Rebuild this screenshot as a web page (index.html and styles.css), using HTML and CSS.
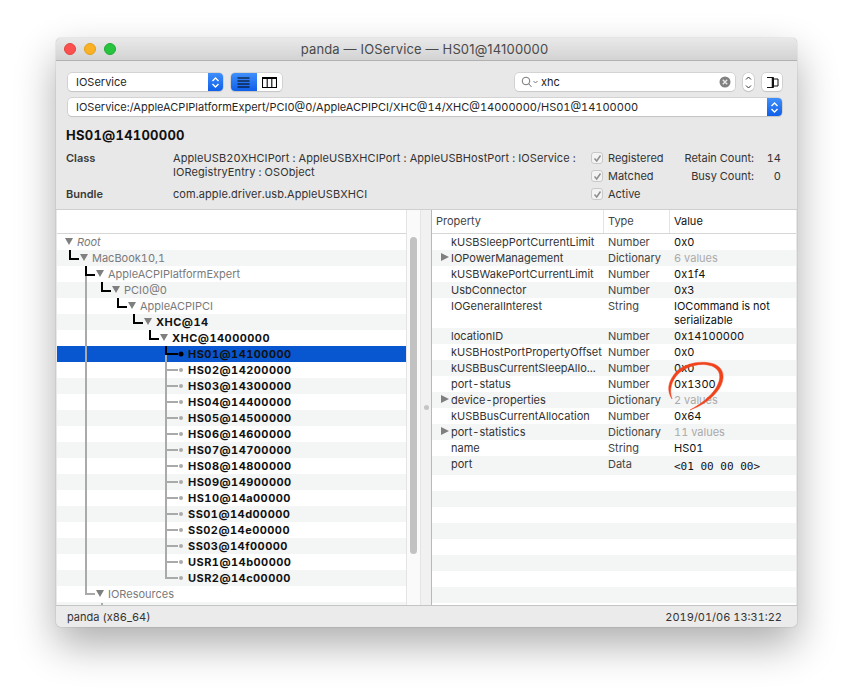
FILE: index.html
```html
<!DOCTYPE html>
<html lang="en">
<head>
  <meta charset="UTF-8">
  <title>panda — IOService — HS01@14100000</title>
  <link rel="stylesheet" href="styles.css">
</head>
<body>
  <div class="window">
    <div class="titlebar">
      <div class="lights">
        <span class="light red"></span>
        <span class="light yellow"></span>
        <span class="light green"></span>
      </div>
      <div class="title">panda — IOService — HS01@14100000</div>
    </div>

    <div class="toolbar">
      <div class="row-top">
        <div class="popup plane-popup">
          <span class="popup-text">IOService</span>
          <span class="popup-arrows">
            <svg width="9" height="13" viewBox="0 0 9 13"><path d="M1.500 5 4.500 2 7.500 5M1.500 8 4.500 11 7.500 8" fill="none" stroke="#fff" stroke-width="1.400"/></svg>
          </span>
        </div>
        <div class="segment">
          <span class="seg seg-on">
            <svg width="13" height="11" viewBox="0 0 13 11"><path d="M.5 1H12.500M.5 4H12.500M.5 7H12.500M.5 10H12.500" stroke="#000" stroke-width="1.100"/></svg>
          </span>
          <span class="seg">
            <svg width="15" height="11" viewBox="0 0 15 11"><path d="M.5 1H14.500V10.500H.5ZM5.200 1V10.500M9.800 1V10.500" fill="none" stroke="#000" stroke-width="1.100"/><path d="M0 1H15" stroke="#000" stroke-width="2"/></svg>
          </span>
        </div>
        <div class="search">
          <svg class="search-icon" width="18" height="12" viewBox="0 0 18 12"><circle cx="5" cy="5" r="3.800" fill="none" stroke="#777" stroke-width="1"/><path d="M7.800 7.800 10.500 11M12.500 5 14.500 7 16.500 5" fill="none" stroke="#777" stroke-width="1"/></svg>
          <span class="search-text">xhc</span>
          <svg class="search-clear" width="12" height="12" viewBox="0 0 12 12"><circle cx="6" cy="6" r="5.500" fill="#808080"/><path d="M3.800 3.800 8.200 8.200M8.200 3.800 3.800 8.200" stroke="#e8e8e8" stroke-width="1.400"/></svg>
        </div>
        <div class="stepper">
          <svg width="7" height="15" viewBox="0 0 7 15"><path d="M1 4.500 3.500 2 6 4.500M1 10.500 3.500 13 6 10.500" fill="none" stroke="#333" stroke-width="1"/></svg>
        </div>
        <div class="inspector">
          <svg width="13" height="13" viewBox="0 0 13 13"><path d="M1 1.500H7.500V11.500H1M7.500 3H12V10H7.500" fill="none" stroke="#111" stroke-width="1"/><path d="M6.500 1.500V11.500" stroke="#111" stroke-width="1.500"/></svg>
        </div>
      </div>

      <div class="popup path-popup">
        <span class="popup-text">IOService:/AppleACPIPlatformExpert/PCI0@0/AppleACPIPCI/XHC@14/XHC@14000000/HS01@14100000</span>
        <span class="popup-arrows">
          <svg width="9" height="13" viewBox="0 0 9 13"><path d="M1.500 5 4.500 2 7.500 5M1.500 8 4.500 11 7.500 8" fill="none" stroke="#fff" stroke-width="1.400"/></svg>
        </span>
      </div>

      <h1 class="entry-name">HS01@14100000</h1>

      <div class="info">
        <div class="info-text">
          <div class="info-row">
            <span class="info-label">Class</span>
            <span class="info-value">AppleUSB20XHCIPort : AppleUSBXHCIPort : AppleUSBHostPort : IOService : IORegistryEntry : OSObject</span>
          </div>
          <div class="info-row">
            <span class="info-label">Bundle</span>
            <span class="info-value">com.apple.driver.usb.AppleUSBXHCI</span>
          </div>
        </div>
        <div class="checks">
          <div class="check"><span class="check-box"><svg width="9" height="9" viewBox="0 0 9 9"><path d="M1.500 4.500 3.700 7 7.500 1.500" fill="none" stroke="#8e8e8e" stroke-width="1.500"/></svg></span>Registered</div>
          <div class="check"><span class="check-box"><svg width="9" height="9" viewBox="0 0 9 9"><path d="M1.500 4.500 3.700 7 7.500 1.500" fill="none" stroke="#8e8e8e" stroke-width="1.500"/></svg></span>Matched</div>
          <div class="check"><span class="check-box"><svg width="9" height="9" viewBox="0 0 9 9"><path d="M1.500 4.500 3.700 7 7.500 1.500" fill="none" stroke="#8e8e8e" stroke-width="1.500"/></svg></span>Active</div>
        </div>
        <div class="counts">
          <span class="count-label">Retain Count:</span><span class="count-value">14</span>
          <span class="count-label">Busy Count:</span><span class="count-value">0</span>
        </div>
      </div>
    </div>

    <div class="panes">
      <!-- Registry tree -->
      <div class="pane tree-pane">
        <div class="tree-main">
          <div class="tree-head"></div>
          <div class="tree-rows">
            <div class="tree-row dim root lvl0"><i class="tri"></i>Root</div>
            <div class="tree-row dim lvl1"><i class="tri"></i>MacBook10,1</div>
            <div class="tree-row dim lvl2"><i class="tri"></i>AppleACPIPlatformExpert</div>
            <div class="tree-row dim lvl3"><i class="tri"></i>PCI0@0</div>
            <div class="tree-row dim lvl4"><i class="tri"></i>AppleACPIPCI</div>
            <div class="tree-row strong lvl5"><i class="tri"></i>XHC@14</div>
            <div class="tree-row strong lvl6"><i class="tri"></i>XHC@14000000</div>
            <div class="tree-row strong lvl7 selected">HS01@14100000</div>
            <div class="tree-row strong lvl7">HS02@14200000</div>
            <div class="tree-row strong lvl7">HS03@14300000</div>
            <div class="tree-row strong lvl7">HS04@14400000</div>
            <div class="tree-row strong lvl7">HS05@14500000</div>
            <div class="tree-row strong lvl7">HS06@14600000</div>
            <div class="tree-row strong lvl7">HS07@14700000</div>
            <div class="tree-row strong lvl7">HS08@14800000</div>
            <div class="tree-row strong lvl7">HS09@14900000</div>
            <div class="tree-row strong lvl7">HS10@14a00000</div>
            <div class="tree-row strong lvl7">SS01@14d00000</div>
            <div class="tree-row strong lvl7">SS02@14e00000</div>
            <div class="tree-row strong lvl7">SS03@14f00000</div>
            <div class="tree-row strong lvl7">USR1@14b00000</div>
            <div class="tree-row strong lvl7">USR2@14c00000</div>
            <div class="tree-row dim lvl2"><i class="tri"></i>IOResources</div>
            <div class="tree-row"></div>
          </div>
          <svg class="tree-lines" width="349" height="371" viewBox="0 0 349 371">
            <g fill="none" stroke="#aaa" stroke-width="2">
              <path d="M29 32V360H38"/>
              <path d="M109 112V344H121"/>
              <path d="M109 136H121M109 152H121M109 168H121M109 184H121M109 200H121M109 216H121M109 232H121M109 248H121M109 264H121M109 280H121M109 296H121M109 312H121M109 328H121"/>
              <path d="M45 369V371"/>
            </g>
            <g fill="#aaa">
              <circle cx="124" cy="136" r="2"/><circle cx="124" cy="152" r="2"/><circle cx="124" cy="168" r="2"/>
              <circle cx="124" cy="184" r="2"/><circle cx="124" cy="200" r="2"/><circle cx="124" cy="216" r="2"/>
              <circle cx="124" cy="232" r="2"/><circle cx="124" cy="248" r="2"/><circle cx="124" cy="264" r="2"/>
              <circle cx="124" cy="280" r="2"/><circle cx="124" cy="296" r="2"/><circle cx="124" cy="312" r="2"/>
              <circle cx="124" cy="328" r="2"/><circle cx="124" cy="344" r="2"/>
            </g>
            <g fill="none" stroke="#000" stroke-width="2">
              <path d="M13 16V25H22"/>
              <path d="M29 32V41H38"/>
              <path d="M45 48V57H54"/>
              <path d="M61 64V73H70"/>
              <path d="M77 80V89H86"/>
              <path d="M93 96V105H102"/>
              <path d="M109 112V120H121"/>
            </g>
            <circle cx="124" cy="120" r="2.500" fill="#000"/>
          </svg>
        </div>
        <div class="tree-scroll"><div class="scroll-thumb"></div></div>
      </div>

      <div class="splitter"><span class="split-dot"></span></div>

      <!-- Properties -->
      <div class="pane prop-pane">
        <div class="prop-head">
          <span class="col-prop">Property</span>
          <span class="col-type">Type</span>
          <span class="col-value">Value</span>
        </div>
        <div class="prop-rows">
          <div class="prop-row"><span class="col-prop">kUSBSleepPortCurrentLimit</span><span class="col-type">Number</span><span class="col-value">0x0</span></div>
          <div class="prop-row"><span class="col-prop"><i class="tri-right"></i>IOPowerManagement</span><span class="col-type">Dictionary</span><span class="col-value faint">6 values</span></div>
          <div class="prop-row"><span class="col-prop">kUSBWakePortCurrentLimit</span><span class="col-type">Number</span><span class="col-value">0x1f4</span></div>
          <div class="prop-row"><span class="col-prop">UsbConnector</span><span class="col-type">Number</span><span class="col-value">0x3</span></div>
          <div class="prop-row tall"><span class="col-prop">IOGeneralInterest</span><span class="col-type">String</span><span class="col-value">IOCommand is not serializable</span></div>
          <div class="prop-row"><span class="col-prop">locationID</span><span class="col-type">Number</span><span class="col-value">0x14100000</span></div>
          <div class="prop-row"><span class="col-prop">kUSBHostPortPropertyOffset</span><span class="col-type">Number</span><span class="col-value">0x0</span></div>
          <div class="prop-row"><span class="col-prop">kUSBBusCurrentSleepAllo...</span><span class="col-type">Number</span><span class="col-value">0x0</span></div>
          <div class="prop-row"><span class="col-prop">port-status</span><span class="col-type">Number</span><span class="col-value">0x1300</span></div>
          <div class="prop-row"><span class="col-prop"><i class="tri-right"></i>device-properties</span><span class="col-type">Dictionary</span><span class="col-value faint">2 values</span></div>
          <div class="prop-row"><span class="col-prop">kUSBBusCurrentAllocation</span><span class="col-type">Number</span><span class="col-value">0x64</span></div>
          <div class="prop-row"><span class="col-prop"><i class="tri-right"></i>port-statistics</span><span class="col-type">Dictionary</span><span class="col-value faint">11 values</span></div>
          <div class="prop-row"><span class="col-prop">name</span><span class="col-type">String</span><span class="col-value">HS01</span></div>
          <div class="prop-row port"><span class="col-prop">port</span><span class="col-type">Data</span><span class="col-value mono">&lt;01 00 00 00&gt;</span></div>
          <div class="prop-row"></div>
          <div class="prop-row"></div>
          <div class="prop-row"></div>
          <div class="prop-row"></div>
          <div class="prop-row"></div>
          <div class="prop-row"></div>
          <div class="prop-row"></div>
          <div class="prop-row"></div>
          <div class="prop-row"></div>
        </div>
      </div>
    </div>

    <div class="statusbar">
      <span>panda (x86_64)</span>
      <span>2019/01/06 13:31:22</span>
    </div>

    <!-- hand drawn circle on top of the screenshot -->
    <svg class="scribble" width="66" height="56" viewBox="0 0 66 56">
      <path d="M8 41C3 33 3 24 13 13 22 5 38 2 50 6 60 10 62 20 55 31 48 41 37 48 26 52 37 46 46 39 52 30 58 20 57 12 48 8 37 4 23 8 15 15 7 23 5 32 8 41Z" fill="#f0431c" stroke="#f0431c" stroke-width=".5"/>
    </svg>
  </div>
</body>
</html>
```

FILE: styles.css
```css
/* Base */
body {
  margin: 0;
  padding: 0;
  background: #fff;
  font-family: Inter, "Liberation Sans", Arial, sans-serif;
  font-size: 11px;
  font-variant-numeric: tabular-nums;
  color: #262626;
  height: 700px;
  overflow: hidden;
}

/* Window */
.window {
  position: relative;
  width: 741px;
  height: 589px;
  margin: 38px 0 0 56px;
  background: #e8e8e8;
  border-radius: 5px;
  box-shadow: 0 0 1px rgba(0, 0, 0, .5), 0 18px 40px rgba(0, 0, 0, .32);
  display: flex;
  flex-direction: column;
}

/* Title bar */
.titlebar {
  height: 22px;
  display: flex;
  align-items: center;
  position: relative;
  background: linear-gradient(#e9e9e9, #d3d3d3);
  border-bottom: 1px solid #b1b1b1;
  border-radius: 5px 5px 0 0;
}
.lights {
  display: flex;
  gap: 8px;
  padding-left: 8px;
}
.light {
  width: 12px;
  height: 12px;
  border-radius: 50%;
  box-sizing: border-box;
}
.red { background: #fc4f4f; border: 1px solid #e2463f; }
.yellow { background: #fbb125; border: 1px solid #e1a116; }
.green { background: #28c33f; border: 1px solid #22ab34; }
.title {
  position: absolute;
  left: 0;
  right: 4px;
  text-align: center;
  font-size: 13px;
  font-variant-numeric: normal;
  letter-spacing: .15px;
  color: #4a4a4a;
}

/* Toolbar */
.toolbar {
  height: 148px;
  box-sizing: border-box;
  padding: 12px 15px 0 12px;
}
.row-top {
  display: flex;
  align-items: center;
  height: 18px;
}
.popup {
  display: flex;
  height: 18px;
  box-sizing: border-box;
  background: #fff;
  border-radius: 4px;
  box-shadow: 0 0 0 .5px #bdbdbd, 0 1px 1px rgba(0, 0, 0, .12);
  overflow: hidden;
}
.plane-popup { width: 155px; }
.path-popup { margin-top: 7px; }
.popup-text {
  flex: 1;
  padding-left: 8px;
  line-height: 18px;
  white-space: nowrap;
}
.popup-arrows {
  width: 15px;
  background: linear-gradient(#3f8ffb, #0f5fea);
  display: flex;
  align-items: center;
  justify-content: center;
}
.segment {
  display: flex;
  width: 51px;
  height: 18px;
  margin-left: 8px;
  background: #fff;
  border-radius: 4px;
  box-shadow: 0 0 0 .5px #bdbdbd, 0 1px 1px rgba(0, 0, 0, .12);
  overflow: hidden;
}
.seg {
  flex: 1;
  display: flex;
  align-items: center;
  justify-content: center;
}
.seg-on { background: linear-gradient(#3f8ffb, #0f5fea); }
.search {
  display: flex;
  align-items: center;
  width: 220px;
  height: 18px;
  box-sizing: border-box;
  margin-left: 233px;
  padding: 0 4px 0 6px;
  background: #fff;
  border-radius: 4px;
  box-shadow: 0 0 0 .5px #bdbdbd, 0 1px 1px rgba(0, 0, 0, .08);
}
.search-text { flex: 1; padding-left: 2px; color: #222; }
.stepper {
  width: 11px;
  height: 18px;
  margin-left: 8px;
  background: #fff;
  border-radius: 5px;
  box-shadow: 0 0 0 .5px #bdbdbd, 0 1px 1px rgba(0, 0, 0, .12);
  display: flex;
  align-items: center;
  justify-content: center;
}
.inspector {
  width: 20px;
  height: 18px;
  margin-left: 8px;
  background: #fff;
  border-radius: 4px;
  box-shadow: 0 0 0 .5px #bdbdbd, 0 1px 1px rgba(0, 0, 0, .12);
  display: flex;
  align-items: center;
  justify-content: center;
}
.entry-name {
  margin: 11px 0 0 -2px;
  font-size: 13px;
  line-height: 16px;
  font-weight: 700;
  letter-spacing: .25px;
  color: #111;
}

/* Class / bundle info */
.info {
  display: flex;
  margin: 8px 0 0 -2px;
}
.info-text { width: 525px; }
.info-row {
  display: flex;
  line-height: 14px;
}
.info-row + .info-row { margin-top: 8px; }
.info-label {
  width: 107px;
  font-weight: 600;
  color: #3a3a3a;
}
.info-value {
  width: 412px;
  letter-spacing: .08px;
  color: #333;
}
.checks {
  width: 90px;
  display: flex;
  flex-direction: column;
  gap: 4px;
}
.check {
  display: flex;
  align-items: center;
  height: 14px;
  color: #333;
}
.check-box {
  width: 12px;
  height: 12px;
  box-sizing: border-box;
  margin-right: 5px;
  background: #f3f3f3;
  border: 1px solid #c9c9c9;
  border-radius: 3px;
  display: flex;
  align-items: center;
  justify-content: center;
}
.counts {
  width: 100px;
  display: grid;
  grid-template-columns: 73px 27px;
  grid-auto-rows: 14px;
  row-gap: 4px;
  text-align: right;
  color: #333;
}

/* Panes */
.panes {
  display: flex;
  height: 397px;
  box-sizing: border-box;
  border-top: 1px solid #cfcfcf;
  border-bottom: 1px solid #c4c4c4;
  padding: 0 1px;
}
.pane { background: #fff; }
.tree-pane {
  display: flex;
  width: 364px;
}
.tree-main {
  position: relative;
  width: 349px;
  overflow: hidden;
}
.tree-head {
  height: 23px;
  border-bottom: 1px solid #d6d6d6;
}
.tree-row {
  position: relative;
  height: 16px;
  line-height: 16px;
  white-space: nowrap;
}
.tree-row:nth-child(even) { background: #f4f5f5; }
.tree-row.selected { background: #0856d0; }
.dim { color: #7a7a7a; }
.root { font-style: italic; }
.strong { font-weight: 700; letter-spacing: .45px; color: #111; }
.lvl0 { padding-left: 20px; }
.lvl1 { padding-left: 35px; }
.lvl2 { padding-left: 51px; }
.lvl3 { padding-left: 67px; }
.lvl4 { padding-left: 83px; }
.lvl5 { padding-left: 99px; }
.lvl6 { padding-left: 115px; }
.lvl7 { padding-left: 131px; }
.tri {
  position: absolute;
  margin-left: -12px;
  top: 4px;
  width: 0;
  height: 0;
  border-left: 4.5px solid transparent;
  border-right: 4.5px solid transparent;
  border-top: 7px solid #7f7f7f;
}
.tree-lines {
  position: absolute;
  left: 0;
  top: 24px;
  pointer-events: none;
}
.tree-scroll {
  width: 15px;
  box-sizing: border-box;
  padding: 27px 3px 0 3px;
  background: #fafafa;
  border-left: 1px solid #e4e4e4;
  border-right: 1px solid #e4e4e4;
}
.scroll-thumb {
  height: 317px;
  background: #c2c2c2;
  border-radius: 4px;
}
.splitter {
  width: 10px;
  background: #f1f1f1;
  display: flex;
  align-items: center;
  justify-content: center;
  border-right: 1px solid #b8b8b8;
}
.split-dot {
  width: 5px;
  height: 5px;
  border-radius: 50%;
  background: #c4c4c4;
}

/* Property table */
.prop-pane { flex: 1; overflow: hidden; }
.prop-head {
  display: flex;
  height: 23px;
  line-height: 23px;
  border-bottom: 1px solid #d6d6d6;
  color: #444;
}
.prop-head span { box-shadow: -1px 0 0 #e4e4e4; }
.prop-head .col-prop { box-shadow: none; }
.prop-row {
  display: flex;
  height: 16px;
  line-height: 14px;
  padding: 1px 0;
  box-sizing: border-box;
}
.prop-row.tall { height: 30px; }
.prop-row.port { height: 19px; }
.prop-row:nth-child(even) { background: #f4f5f5; }
.col-prop {
  position: relative;
  width: 172px;
  box-sizing: border-box;
  padding-left: 4px;
}
.prop-row .col-prop { padding-left: 19px; color: #333; }
.col-type {
  width: 66px;
  box-sizing: border-box;
  padding-left: 4px;
  color: #444;
}
.col-value {
  flex: 1;
  box-sizing: border-box;
  padding-left: 4px;
  padding-right: 20px;
  color: #111;
}
.faint { color: #aaa; }
.mono {
  padding-top: 3px;
  font-family: "DejaVu Sans Mono", "Liberation Mono", monospace;
  font-size: 11px;
}
.tri-right {
  position: absolute;
  left: 9px;
  top: 2px;
  width: 0;
  height: 0;
  border-top: 4.5px solid transparent;
  border-bottom: 4.5px solid transparent;
  border-left: 8px solid #7f7f7f;
}

/* Status bar */
.statusbar {
  flex: 1;
  display: flex;
  align-items: center;
  justify-content: space-between;
  padding: 0 15px 0 11px;
  color: #333;
  background: #ebebeb;
  border-radius: 0 0 5px 5px;
}

/* Red circle drawn over the table */
.scribble {
  position: absolute;
  left: 608px;
  top: 320px;
}
```
